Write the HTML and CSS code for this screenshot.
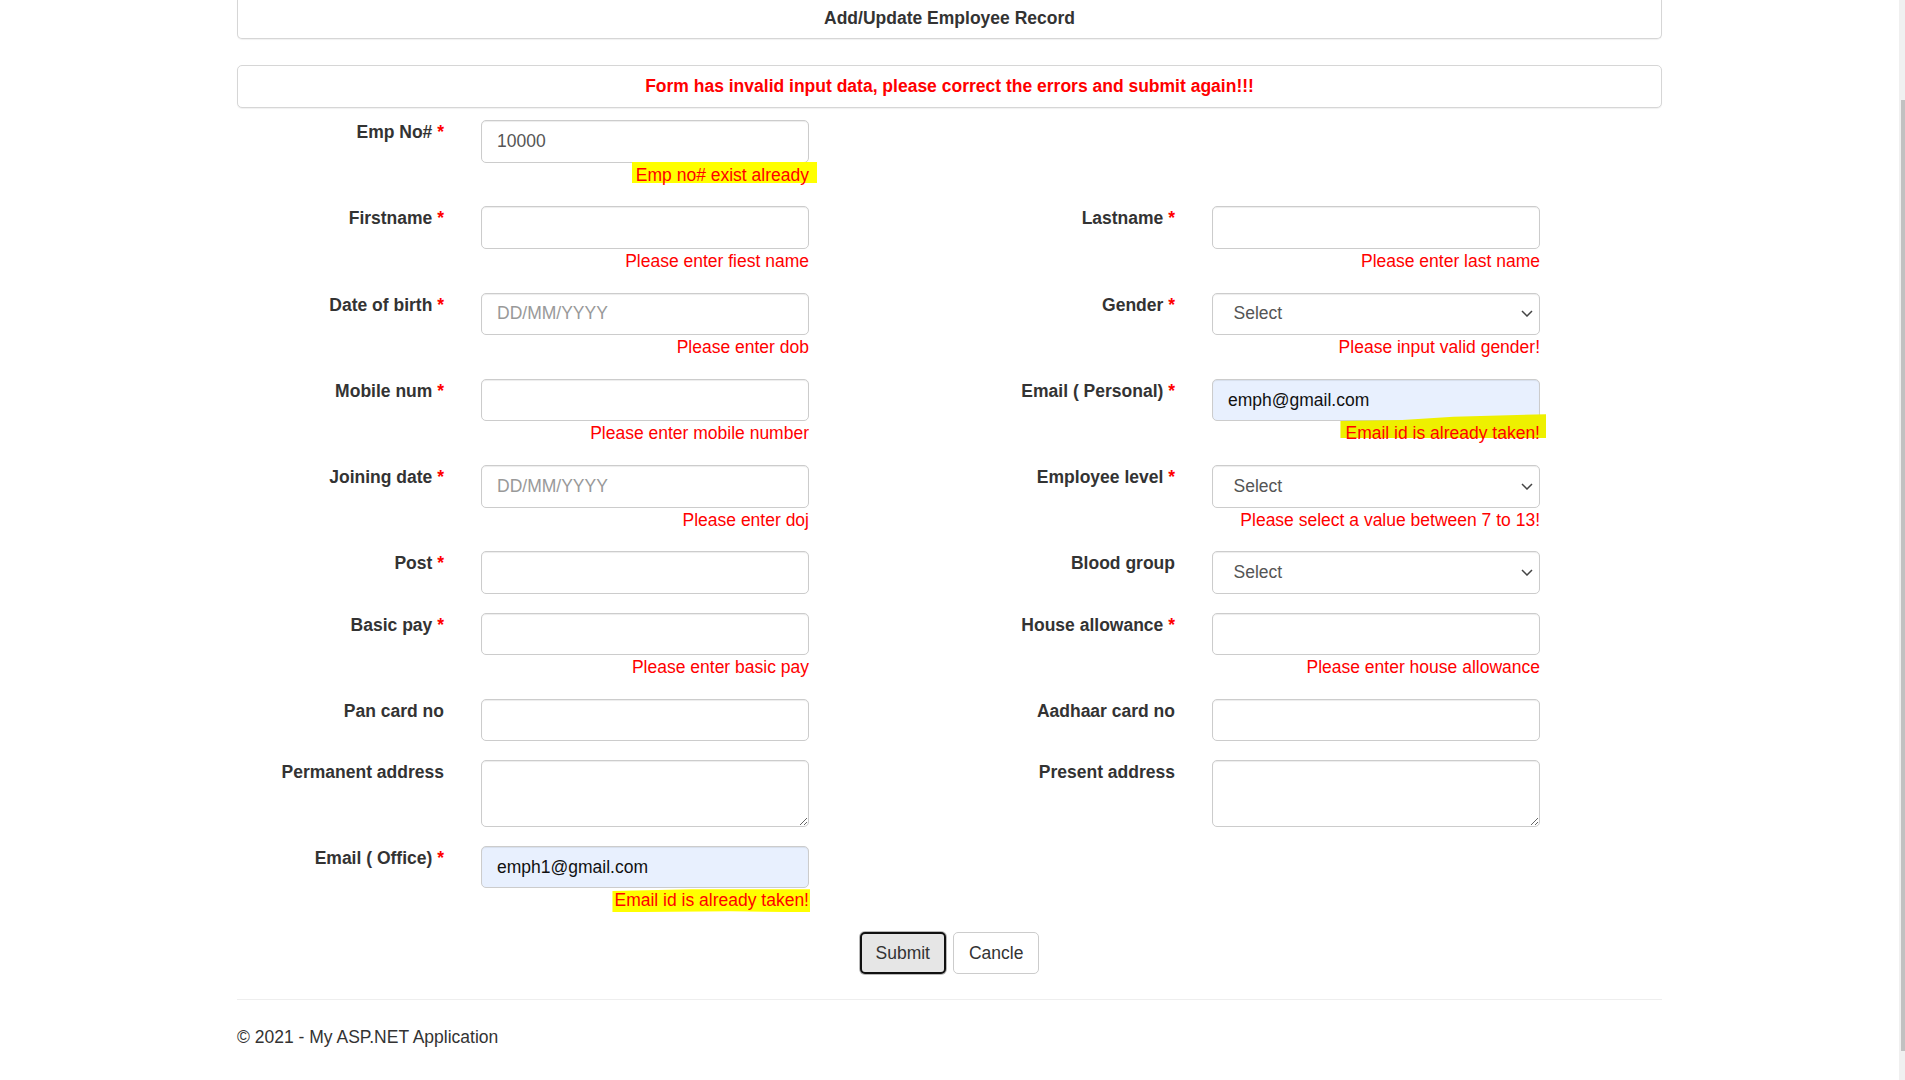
FILE: index.html
```html
<!DOCTYPE html>
<html lang="en">
<head>
<meta charset="utf-8">
<title>Add/Update Employee Record</title>
<link rel="stylesheet" href="styles.css">
</head>
<body>
<div class="page">
  <main class="main">
    <div class="container">
      <div class="panel panel-title">Add/Update Employee Record</div>
      <div class="panel panel-alert">Form has invalid input data, please correct the errors and submit again!!!</div>
      <form class="form">
        <div class="row">
          <label class="lbl">Emp No# <span class="req">*</span></label>
          <div class="field">
            <input class="ctl" type="text" value="10000">
            <div class="err"><span class="hl hl-emp">Emp no# exist already</span></div>
          </div>
        </div>
        <div class="row">
          <label class="lbl">Firstname <span class="req">*</span></label>
          <div class="field">
            <input class="ctl" type="text">
            <div class="err">Please enter fiest name</div>
          </div>
          <label class="lbl lbl-right">Lastname <span class="req">*</span></label>
          <div class="field">
            <input class="ctl" type="text">
            <div class="err">Please enter last name</div>
          </div>
        </div>
        <div class="row">
          <label class="lbl">Date of birth <span class="req">*</span></label>
          <div class="field">
            <input class="ctl" type="text" placeholder="DD/MM/YYYY">
            <div class="err">Please enter dob</div>
          </div>
          <label class="lbl lbl-right">Gender <span class="req">*</span></label>
          <div class="field">
            <select class="ctl sel"><option>Select</option></select>
            <div class="err">Please input valid gender!</div>
          </div>
        </div>
        <div class="row">
          <label class="lbl">Mobile num <span class="req">*</span></label>
          <div class="field">
            <input class="ctl" type="text">
            <div class="err">Please enter mobile number</div>
          </div>
          <label class="lbl lbl-right">Email ( Personal) <span class="req">*</span></label>
          <div class="field">
            <input class="ctl autofill" type="text" value="emph@gmail.com">
            <div class="err"><span class="hl hl-marker">Email id is already taken!</span></div>
          </div>
        </div>
        <div class="row">
          <label class="lbl">Joining date <span class="req">*</span></label>
          <div class="field">
            <input class="ctl" type="text" placeholder="DD/MM/YYYY">
            <div class="err">Please enter doj</div>
          </div>
          <label class="lbl lbl-right">Employee level <span class="req">*</span></label>
          <div class="field">
            <select class="ctl sel"><option>Select</option></select>
            <div class="err">Please select a value between 7 to 13!</div>
          </div>
        </div>
        <div class="row">
          <label class="lbl">Post <span class="req">*</span></label>
          <div class="field">
            <input class="ctl" type="text">
          </div>
          <label class="lbl lbl-right">Blood group</label>
          <div class="field">
            <select class="ctl sel"><option>Select</option></select>
          </div>
        </div>
        <div class="row">
          <label class="lbl">Basic pay <span class="req">*</span></label>
          <div class="field">
            <input class="ctl" type="text">
            <div class="err">Please enter basic pay</div>
          </div>
          <label class="lbl lbl-right">House allowance <span class="req">*</span></label>
          <div class="field">
            <input class="ctl" type="text">
            <div class="err">Please enter house allowance</div>
          </div>
        </div>
        <div class="row">
          <label class="lbl">Pan card no</label>
          <div class="field">
            <input class="ctl" type="text">
          </div>
          <label class="lbl lbl-right">Aadhaar card no</label>
          <div class="field">
            <input class="ctl" type="text">
          </div>
        </div>
        <div class="row">
          <label class="lbl">Permanent address</label>
          <div class="field">
            <textarea class="ctl area" rows="2"></textarea>
          </div>
          <label class="lbl lbl-right">Present address</label>
          <div class="field">
            <textarea class="ctl area" rows="2"></textarea>
          </div>
        </div>
        <div class="row">
          <label class="lbl">Email ( Office) <span class="req">*</span></label>
          <div class="field">
            <input class="ctl autofill" type="text" value="emph1@gmail.com">
            <div class="err"><span class="hl hl-office">Email id is already taken!</span></div>
          </div>
        </div>
        <div class="actions">
          <button type="button" class="btn btn-focus">Submit</button>
          <button type="button" class="btn">Cancle</button>
        </div>
      </form>
      <hr class="rule">
      <footer class="footer">© 2021 - My ASP.NET Application</footer>
    </div>
  </main>
  <div class="scrollbar"><div class="thumb"></div></div>
</div>
</body>
</html>
```

FILE: styles.css
```css
html, body {
  margin: 0;
  padding: 0;
  overflow: hidden;
  background: #ffffff;
}

body {
  font-family: "Liberation Sans", Arial, Helvetica, sans-serif;
  font-size: 17.5px;
  line-height: 25px;
  color: #333333;
}

.page {
  display: flex;
  width: 1905px;
  height: 1080px;
}

.main {
  flex: 1;
  min-width: 0;
}

.container {
  width: 1425px;
  margin: 0 auto;
}

.panel {
  box-sizing: border-box;
  background: #ffffff;
  border: 1px solid #d6d6d6;
  border-radius: 5px;
  box-shadow: 0 1px 1px rgba(0, 0, 0, 0.06);
  text-align: center;
  font-weight: bold;
  display: flex;
  align-items: center;
  justify-content: center;
}

.panel-title {
  height: 39px;
  padding-bottom: 2px;
  border-top: none;
  border-radius: 0 0 5px 5px;
  color: #333333;
}

.panel-alert {
  height: 42.5px;
  margin-top: 26px;
  margin-bottom: 12.5px;
  color: #ff0000;
}

.form {
  margin: 0;
}

.row {
  display: grid;
  grid-template-columns: 244px 328px 403px 328px;
  align-items: start;
  margin-bottom: 18.75px;
}

.lbl {
  grid-column: 1;
  text-align: right;
  font-weight: bold;
  padding-right: 37px;
  color: #333333;
}

.lbl-right {
  grid-column: 3;
  padding-right: 37px;
}

.req {
  color: #ff0000;
}

.field {
  min-width: 0;
}

.ctl {
  display: block;
  box-sizing: border-box;
  width: 100%;
  height: 42.5px;
  margin: 0;
  padding: 7.5px 15px;
  font-family: inherit;
  font-size: 17.5px;
  line-height: 25px;
  color: #555555;
  background-color: #ffffff;
  border: 1px solid #cccccc;
  border-radius: 5px;
  box-shadow: inset 0 1px 1px rgba(0, 0, 0, 0.075);
}

.ctl::placeholder {
  color: #999999;
}

.autofill {
  background-color: #e8f0fe;
  color: #111111;
}

.sel {
  -webkit-appearance: none;
  appearance: none;
  padding: 7.5px 30px 7.5px 20.5px;
  background-image: url("data:image/svg+xml,%3Csvg xmlns='http://www.w3.org/2000/svg' viewBox='0 0 12 7'%3E%3Cpath d='M1 1 L6 6 L11 1' fill='none' stroke='%23444' stroke-width='1.5'/%3E%3C/svg%3E");
  background-repeat: no-repeat;
  background-position: right 6px center;
  background-size: 12px 7px;
}

.area {
  height: 67px;
}

.err {
  text-align: right;
  color: #ff0000;
  line-height: 25px;
}

.hl {
  position: relative;
  display: inline-block;
  z-index: 0;
}

.hl::before {
  content: "";
  position: absolute;
  z-index: -1;
}

.hl-emp::before {
  left: -4px;
  right: -8px;
  top: -1px;
  height: 21px;
  background: #ffff00;
}

.hl-office::before {
  left: -2px;
  right: -1px;
  top: 1px;
  height: 23px;
  background: #ffff00;
  clip-path: polygon(0 8%, 40% 0, 100% 0, 100% 100%, 60% 96%, 0 100%);
}

.hl-marker::before {
  left: -5px;
  right: -6px;
  top: -7px;
  height: 24px;
  background: #eef000;
  clip-path: polygon(0 28%, 30% 24%, 55% 10%, 100% 0, 100% 100%, 0 100%);
}

.actions {
  display: flex;
  justify-content: center;
  gap: 7px;
}

.btn {
  box-sizing: border-box;
  height: 41.5px;
  padding: 7.5px 15px;
  font-family: inherit;
  font-size: 17.5px;
  line-height: 25px;
  color: #333333;
  background: #ffffff;
  border: 1px solid #cccccc;
  border-radius: 5px;
  cursor: pointer;
}

.btn-focus {
  background: #e6e6e6;
  border: 2px solid #111111;
  padding: 6.5px 14px;
  box-shadow: 0 0 0 1px #b8b8b8;
}

.rule {
  margin: 25px 0;
  border: 0;
  border-top: 1px solid #eeeeee;
  height: 0;
}

.footer {
  color: #333333;
}

.scrollbar {
  flex: 0 0 6px;
  width: 6px;
  height: 1080px;
  background: #f0f0f0;
}

.thumb {
  margin-top: 100px;
  margin-left: 2px;
  width: 4px;
  height: 951px;
  background: #c1c1c1;
}
```
